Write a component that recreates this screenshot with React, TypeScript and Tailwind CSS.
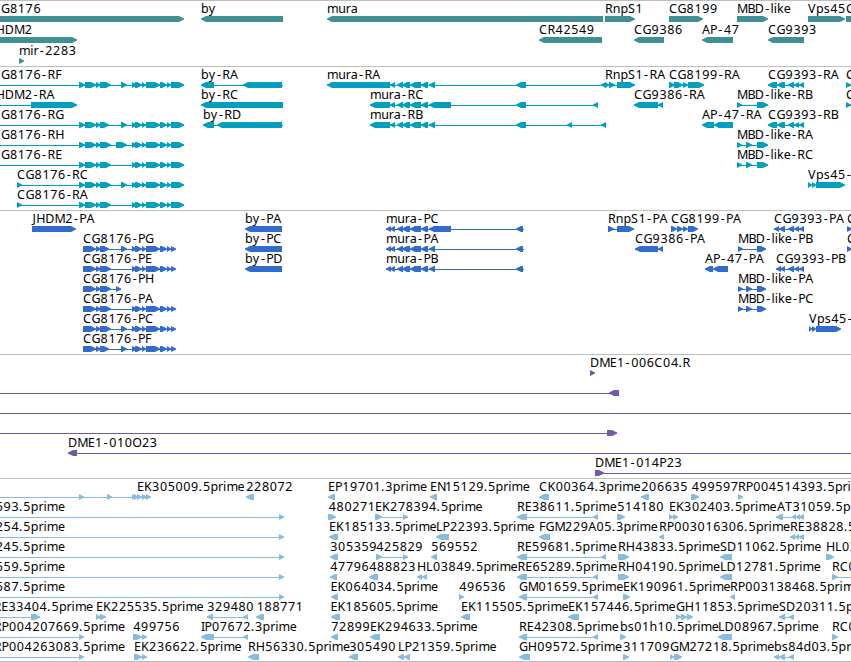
type Label = [number, string];
type Line = [number, number];

interface TrackRow {
  labels?: Label[];
  lines?: Line[];
  // "start>end" points right, "start<end" points left
  marks?: string;
}

interface Track {
  name: string;
  color: string;
  className: string;
  pitch: number;
  rows: TrackRow[];
}

const WIDTH = 851;
const HEAD = 5;

const advances: Record<string, number> = {
  '-': 6.5, '.': 4, A: 8, B: 7.3, C: 8.5, D: 9.3, E: 6.9, F: 6.6, G: 8.8, H: 9.1, I: 3.6, J: 3.7,
  K: 7.9, L: 6.5, M: 10.4, O: 9.3, P: 7.1, R: 7.8, S: 7, T: 7.2, V: 8, a: 7.1, b: 7.7, d: 7.7, e: 7,
  h: 7.6, i: 3.3, k: 6.6, l: 3.3, m: 11.2, n: 7.6, p: 7.7, r: 5, s: 6.2, u: 7.6, y: 7,
};

const genes: TrackRow[] = [
  {
    labels: [[-7.6, 'CG8176'], [201, 'by'], [327, 'mura'], [605, 'RnpS1'], [669, 'CG8199'], [737, 'MBD-like'], [808, 'Vps45'], [846, 'C']],
    marks: '-7>184 201<283 327<603 605>635 669>703 737>768 808>845 846>880',
  },
  {
    labels: [[-8, 'JHDM2'], [539, 'CR42549'], [634, 'CG9386'], [702, 'AP-47'], [768, 'CG9393']],
    marks: '-8>77 539<602 634<664 702<733 768<804',
  },
  { labels: [[19, 'mir-2283']], marks: '19>24' },
];

const transcripts: TrackRow[] = [
  {
    labels: [[-7.6, 'CG8176-RF'], [201, 'by-RA'], [327, 'mura-RA'], [605, 'RnpS1-RA'], [669, 'CG8199-RA'], [768, 'CG9393-RA'], [846, 'C']],
    lines: [[0, 184], [201, 283], [327, 606], [605, 635], [669, 704], [768, 804], [846, 851]],
    marks:
      '79>85 85>96 96>101 100>111 121>127 132>137 135>142 142>146 146>160 160>167 167>171 171>184 201<214 243<282 327<390 390<395 397<403 402<410 410<421 421<428 429<435 516<526 601<606 605>609 609>615 617>635 669>675 674>683 683>688 688>704 768<777 777<785 788<794 794<799 799<804 846>851',
  },
  {
    labels: [[-8, 'JHDM2-RA'], [201, 'by-RC'], [370, 'mura-RC'], [634, 'CG9386-RA'], [737, 'MBD-like-RB'], [846, 'C']],
    lines: [[0, 77], [370, 598], [634, 663], [737, 768], [846, 851]],
    marks:
      '31>77 201<283 370<390 390<395 397<403 402<410 410<421 421<428 429<451 516<526 593<598 634<658 658<663 737>742 757>768 846>851',
  },
  {
    labels: [[-7.6, 'CG8176-RG'], [203, 'by-RD'], [370, 'mura-RB'], [702, 'AP-47-RA'], [768, 'CG9393-RB']],
    lines: [[0, 184], [203, 283], [370, 606], [768, 804]],
    marks:
      '79>85 85>96 96>101 100>109 121>127 132>137 135>142 142>146 146>160 160>167 167>171 171>184 203<214 217<282 370<390 390<395 397<403 402<410 410<421 421<428 429<435 516<526 567<572 601<606 702<714 714<733 768<777 777<785 788<794 794<799 799<804',
  },
  {
    labels: [[-7.6, 'CG8176-RH'], [737, 'MBD-like-RA']],
    lines: [[0, 184], [737, 768]],
    marks:
      '79>85 85>96 96>101 100>111 116>127 132>137 135>142 142>146 146>160 160>167 167>171 171>184 737>742 746>752 757>768',
  },
  {
    labels: [[-7.6, 'CG8176-RE'], [737, 'MBD-like-RC']],
    lines: [[0, 184], [737, 768]],
    marks:
      '79>85 85>96 96>101 100>111 132>137 135>142 142>146 146>160 160>167 167>171 171>184 737>742 746>752 757>768',
  },
  {
    labels: [[17, 'CG8176-RC'], [808, 'Vps45-RA']],
    lines: [[17, 184]],
    marks:
      '17>22 79>85 85>96 96>101 100>111 121>127 132>137 135>142 142>146 146>160 160>167 167>171 171>184 808>812 812>816 816>845',
  },
  {
    labels: [[17, 'CG8176-RA']],
    lines: [[17, 184]],
    marks: '17>22 79>85 85>96 96>101 100>111 132>137 135>142 142>146 146>160 160>167 167>171 171>184',
  },
];

const proteins: TrackRow[] = [
  {
    labels: [[32.5, 'JHDM2-PA'], [245, 'by-PA'], [386, 'mura-PC'], [608, 'RnpS1-PA'], [671, 'CG8199-PA'], [774, 'CG9393-PA'], [847, 'C']],
    lines: [[386, 524], [608, 634], [774, 804]],
    marks:
      '32>76 245<282 386<391 390<395 397<403 402<410 410<421 421<428 429<451 516<523 608>614 617>634 671>677 677>683 683>688 688>698 774<779 779<785 788<794 794<799 799<804 847>852',
  },
  {
    labels: [[83, 'CG8176-PG'], [245, 'by-PC'], [386, 'mura-PA'], [635, 'CG9386-PA'], [738, 'MBD-like-PB'], [847, 'C']],
    lines: [[83, 176], [386, 524], [635, 663], [738, 766]],
    marks:
      '83>96 96>101 100>109 121>127 132>137 135>142 142>146 146>160 160>167 167>171 171>176 245<282 386<391 390<395 397<403 402<410 410<421 421<428 429<435 516<523 635<658 658<663 738>743 757>766 847>852',
  },
  {
    labels: [[83, 'CG8176-PE'], [245, 'by-PD'], [386, 'mura-PB'], [705, 'AP-47-PA'], [776, 'CG9393-PB']],
    lines: [[83, 176], [386, 524], [705, 728], [776, 804]],
    marks:
      '83>96 96>101 100>111 132>137 135>142 142>146 146>160 160>167 167>171 171>176 245<282 386<391 390<395 397<403 402<410 410<421 421<428 429<435 516<523 705<713 713<728 776<781 780<785 788<794 794<799 799<804',
  },
  {
    labels: [[83, 'CG8176-PH'], [738, 'MBD-like-PA']],
    lines: [[83, 121], [738, 766]],
    marks: '83>96 96>101 100>111 116>121 738>743 746>752 757>766',
  },
  {
    labels: [[83, 'CG8176-PA'], [738, 'MBD-like-PC']],
    lines: [[83, 176], [738, 766]],
    marks:
      '83>96 96>101 100>111 132>137 135>142 142>146 146>160 160>167 167>171 171>176 738>743 746>752 757>766',
  },
  {
    labels: [[83, 'CG8176-PC'], [809, 'Vps45-PA']],
    lines: [[83, 176]],
    marks:
      '83>96 96>101 100>111 121>127 132>137 135>142 142>146 146>160 160>167 167>171 171>176 809>812 812>816 816>841',
  },
  {
    labels: [[83, 'CG8176-PF']],
    lines: [[83, 176]],
    marks: '83>96 96>101 100>109 121>127 132>137 135>142 142>146 146>160 160>167 167>171 171>176',
  },
];

const clones: TrackRow[] = [
  { labels: [[590, 'DME1-006C04.R']], marks: '590>595' },
  { lines: [[0, 619]], marks: '609<619' },
  { lines: [[0, 851]] },
  { lines: [[0, 617]], marks: '607>617' },
  { labels: [[68, 'DME1-010O23']], lines: [[68, 851]], marks: '68<77' },
  { labels: [[595, 'DME1-014P23']], lines: [[595, 851]], marks: '595>604' },
];

const ests: TrackRow[] = [
  {
    labels: [[137, 'EK305009.5prime'], [246, '228072'], [328, 'EP19701.3prime'], [430, 'EN15129.5prime'], [539, 'CK00364.3prime'], [641, '206635'], [691.5, '499597'], [738, 'RP004514393.5prime']],
    lines: [[0, 151]],
    marks:
      '79>84 107>112 132>136 134>138 137>142 142>147 146>151 246<254 328<335 430<437 539<549 641<649 691>699 738>743',
  },
  {
    labels: [[-4.5, '593.5prime'], [328.5, '480271'], [375, 'EK278394.5prime'], [517, 'RE38611.5prime'], [617, '514180'], [669, 'EK302403.5prime'], [777, 'AT31059.5prime']],
    lines: [[0, 284], [375, 408], [517, 598], [776, 804]],
    marks:
      '279>284 328>336 375>382 403>408 517<527 593<598 617>625 669>673 673>678 776<783 792<796 796<800 799<804',
  },
  {
    labels: [[-4.5, '254.5prime'], [329, 'EK185133.5prime'], [436, 'LP22393.5prime'], [539, 'FGM229A05.3prime'], [659, 'RP003016306.5prime'], [790, 'RE38828.5prime']],
    lines: [[0, 284]],
    marks: '279>284 329<338 436<449 539<550 659<664 790<795 795<799 799<804',
  },
  {
    labels: [[-4.5, '245.5prime'], [330, '305359'], [376, '425829'], [431, '569552'], [517, 'RE59681.5prime'], [618, 'RH43833.5prime'], [720, 'SD11062.5prime'], [826, 'HL03']],
    lines: [[0, 284], [376, 408], [517, 606]],
    marks: '279>284 330<338 376>382 403>408 431<437 517<527 601<606 618>629 720<732 826>834',
  },
  {
    labels: [[-4.5, '559.5prime'], [330, '47796'], [369, '488823'], [417, 'HL03849.5prime'], [517.5, 'RE65289.5prime'], [618, 'RH04190.5prime'], [720, 'LD12781.5prime'], [832, 'RC0']],
    lines: [[0, 284], [517, 598], [832, 851]],
    marks: '279>284 330<337 369<378 417<422 422<427 517<527 593<598 618>629 720<732 832>838',
  },
  {
    labels: [[-4.5, '587.5prime'], [330.5, 'EK064034.5prime'], [459, '496536'], [519, 'GM01659.5prime'], [623, 'EK190961.5prime'], [730, 'RP003138468.5prime']],
    lines: [[0, 284], [519, 598]],
    marks: '279>284 331<338 459>464 519<527 593<598 623>630 730<735',
  },
  {
    labels: [[-6.6, 'RE33404.5prime'], [96, 'EK225535.5prime'], [207, '329480'], [256.5, '188771'], [330.5, 'EK185605.5prime'], [461, 'EK115505.5prime'], [568, 'EK157446.5prime'], [676, 'GH11853.5prime'], [779, 'SD20311.5prime']],
    lines: [[0, 40], [207, 248], [779, 794]],
    marks:
      '31>40 96>101 100>106 207<213 243<248 256<264 331<340 461<470 568<579 676>681 681>687 687>693 779<785 789<794',
  },
  {
    labels: [[-6.2, 'RP004207669.5prime'], [133, '499756'], [201, 'IP07672.3prime'], [331, '72899'], [370, 'EK294633.5prime'], [519, 'RE42308.5prime'], [620, 'bs01h10.5prime'], [718, 'LD08967.5prime'], [832, 'RC0']],
    lines: [[0, 84], [201, 248], [519, 598]],
    marks: '79>84 133>142 142>147 201<214 243<248 331<338 370<380 519<527 593<598 620>626 718<732 832>838',
  },
  {
    labels: [[-6.2, 'RP004263083.5prime'], [134, 'EK236622.5prime'], [248, 'RH56330.5prime'], [349, '305490'], [398, 'LP21359.5prime'], [519, 'GH09572.5prime'], [623, '311709'], [670, 'GM27218.5prime'], [774, 'bs84d03.5prime']],
    lines: [[0, 84], [774, 794]],
    marks:
      '79>84 134>142 142>147 248<259 349<358 398<404 404<410 519<530 623>629 670>674 674>682 774<779 779<785 789<794',
  },
];

const tracks: Track[] = [
  { name: 'genes', color: '#408f94', className: 'h-[66px]', pitch: 21, rows: genes },
  { name: 'transcripts', color: '#009fc0', className: 'h-[144px]', pitch: 20, rows: transcripts },
  { name: 'proteins', color: '#316ccc', className: 'h-[144px]', pitch: 20, rows: proteins },
  { name: 'clones', color: '#7459aa', className: 'h-[124px]', pitch: 20, rows: clones },
  { name: 'ests', color: '#88bcdd', className: 'h-[184px] border-b', pitch: 20, rows: ests },
];

function glyphPositions(x: number, text: string) {
  let pos = x;
  return text
    .split('')
    .map(c => {
      // the hyphen and the digits are narrower than their cells, so centre them
      const start = c === '-' ? pos + 1.2 : c >= '0' && c <= '9' ? pos + 0.3 : pos;
      pos += advances[c] ?? 7.8;
      return start.toFixed(1);
    })
    .join(' ');
}

function markPath(mark: string) {
  const right = mark.includes('>');
  const [a, b] = mark.split(right ? '>' : '<').map(Number);
  const head = Math.min(HEAD, b - a);
  return right
    ? `M${a} 13H${b - head}L${b} 15.5V16.5L${b - head} 19H${a}Z`
    : `M${b} 13H${a + head}L${a} 15.5V16.5L${a + head} 19H${b}Z`;
}

function Row({ row, color, pitch }: { row: TrackRow; color: string; pitch: number }) {
  return (
    <svg width={WIDTH} height={pitch} className="block shrink-0 overflow-visible">
      <g fill={color}>
        {row.lines?.map(([a, b]) => (
          <rect key={a} x={a} y={16} width={b - a} height={1} />
        ))}
        {row.marks?.split(' ').map(mark => (
          <path key={mark} d={markPath(mark)} />
        ))}
      </g>
      {row.labels?.map(([x, text]) => (
        <text key={x} x={glyphPositions(x, text)} y={10} className="fill-black">
          {text}
        </text>
      ))}
    </svg>
  );
}

export default function App() {
  return (
    <main className="flex h-[662px] w-[851px] flex-col overflow-hidden bg-white font-['Noto_Sans',sans-serif] text-[12.5px]">
      {tracks.map(track => (
        <section
          key={track.name}
          className={`flex shrink-0 flex-col border-t border-[#bebebe] pt-[2px] ${track.className}`}>
          {track.rows.map((row, i) => (
            <Row key={i} row={row} color={track.color} pitch={track.pitch} />
          ))}
        </section>
      ))}
    </main>
  );
}
